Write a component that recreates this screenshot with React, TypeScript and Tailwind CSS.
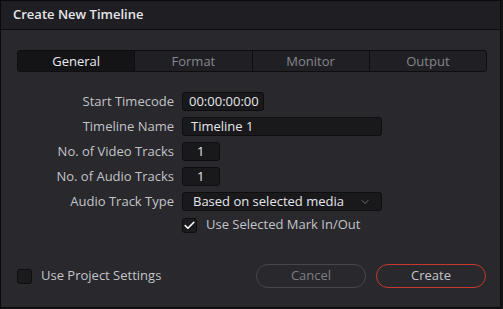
import React from 'react';
import { Check, ChevronDown } from 'lucide-react';

const TABS = ['General', 'Format', 'Monitor', 'Output'];

function Row({ label, children }: { label: string; children: React.ReactNode }) {
  return (
    <div className="flex items-center h-[19px]">
      <div className="w-[173px] text-right text-[13px] text-[#c4c4c8]">{label}</div>
      <div className="ml-[8px] flex">{children}</div>
    </div>
  );
}

export default function App() {
  const [tab, setTab] = React.useState('General');
  const [markInOut, setMarkInOut] = React.useState(true);
  const [useProject, setUseProject] = React.useState(false);

  return (
    <div className="w-[503px] h-[309px] bg-[#141416] font-['Open_Sans',sans-serif]">
      <div className="w-[501px] h-[308px] border border-[#0b0b0d] bg-[#28282d] flex flex-col">
        <div className="h-[29px] shrink-0 bg-[#1f1f23] border-b border-[#0e0e10] flex items-center px-[12px]">
          <span className="text-[13px] font-semibold text-[#e6e6ea]">Create New Timeline</span>
        </div>

        <div className="mt-[20px] ml-[16px] mr-[13px] h-[22px] flex rounded-[3px] border border-[#0e0e10] bg-[#202024] overflow-hidden">
          {TABS.map((t, i) => (
            <button
              key={t}
              onClick={() => setTab(t)}
              className={`flex-1 text-[13px] leading-none ${i > 0 ? 'border-l border-[#0e0e10]' : ''} ${
                tab === t ? 'bg-[#141416] text-[#ececf0]' : 'text-[#86868c]'
              }`}
            >
              {t}
            </button>
          ))}
        </div>

        <div className="mt-[20px] flex flex-col gap-[6px]">
          <Row label="Start Timecode">
            <div className="w-[82px] h-[19px] rounded-[3px] border border-[#0e0e10] bg-[#19191c] text-[13px] text-[#e6e6ea] pl-[6px] flex items-center">
              00:00:00:00
            </div>
          </Row>
          <Row label="Timeline Name">
            <div className="w-[200px] h-[19px] rounded-[3px] border border-[#0e0e10] bg-[#19191c] text-[13px] text-[#e6e6ea] pl-[8px] flex items-center">
              Timeline 1
            </div>
          </Row>
          <Row label="No. of Video Tracks">
            <div className="w-[38px] h-[19px] rounded-[3px] border border-[#0e0e10] bg-[#19191c] text-[13px] text-[#e6e6ea] pl-[14px] flex items-center">
              1
            </div>
          </Row>
          <Row label="No. of Audio Tracks">
            <div className="w-[38px] h-[19px] rounded-[3px] border border-[#0e0e10] bg-[#19191c] text-[13px] text-[#e6e6ea] pl-[14px] flex items-center">
              1
            </div>
          </Row>
          <Row label="Audio Track Type">
            <div className="w-[200px] h-[19px] rounded-[3px] border border-[#0e0e10] bg-[#19191c] text-[13px] text-[#e6e6ea] pl-[10px] pr-[10px] flex items-center justify-between">
              <span>Based on selected media</span>
              <ChevronDown size={12} strokeWidth={1.5} className="text-[#8a8a90]" />
            </div>
          </Row>
          <div className="flex items-center h-[18px] -mt-[1px]">
            <div className="w-[173px]" />
            <button
              onClick={() => setMarkInOut(v => !v)}
              className="ml-[8px] w-[15px] h-[15px] rounded-[3px] border border-[#0e0e10] bg-[#1b1b1e] flex items-center justify-center"
            >
              {markInOut && <Check size={13} strokeWidth={3} className="text-white" />}
            </button>
            <span className="ml-[9px] text-[13px] text-[#c4c4c8]">Use Selected Mark In/Out</span>
          </div>
        </div>

        <div className="mt-auto mb-[19px] ml-[16px] mr-[14px] flex items-center">
          <button
            onClick={() => setUseProject(v => !v)}
            className="w-[15px] h-[15px] rounded-[3px] border border-[#0e0e10] bg-[#1b1b1e] flex items-center justify-center"
          >
            {useProject && <Check size={13} strokeWidth={3} className="text-white" />}
          </button>
          <span className="ml-[9px] text-[13px] text-[#c4c4c8]">Use Project Settings</span>
          <button className="ml-auto w-[110px] h-[24px] rounded-full border border-[#46464c] text-[13px] text-[#7e7e84]">
            Cancel
          </button>
          <button className="ml-[10px] w-[110px] h-[24px] rounded-full border border-[#c8382e] text-[13px] text-[#c4c4c8]">
            Create
          </button>
        </div>
      </div>
    </div>
  );
}
